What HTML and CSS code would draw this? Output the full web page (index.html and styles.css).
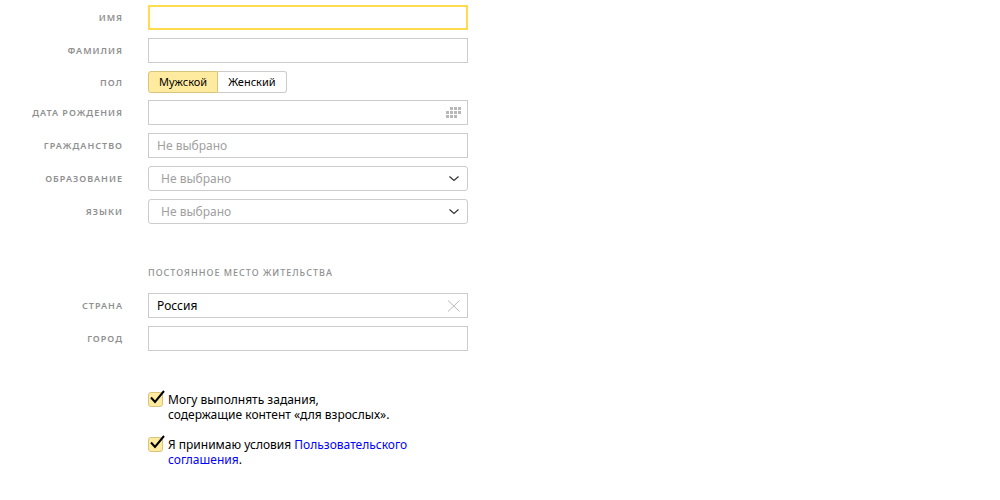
FILE: index.html
```html
<!DOCTYPE html>
<html lang="ru">
<head>
    <meta charset="UTF-8">
    <meta name="viewport" content="width=device-width, initial-scale=1.0">
    <title>Регистрация</title>
    <link rel="stylesheet" href="styles.css">
</head>
<body>
    <form class="form">
        <div class="row">
            <label class="label" for="firstName">Имя</label>
            <div class="field">
                <input class="input active" type="text" id="firstName">
            </div>
        </div>
        <div class="row">
            <label class="label" for="lastName">Фамилия</label>
            <div class="field">
                <input class="input" type="text" id="lastName">
            </div>
        </div>
        <div class="row sexRow" role="radiogroup" aria-labelledby="sexLabel">
            <span class="label" id="sexLabel">Пол</span>
            <div class="switch">
                <label class="option"><input type="radio" name="sex" checked>Мужской</label>
                <label class="option"><input type="radio" name="sex">Женский</label>
            </div>
        </div>
        <div class="row">
            <label class="label" for="birthday">Дата рождения</label>
            <div class="field">
                <input class="input" type="text" id="birthday">
                <button class="iconBtn" type="button" aria-label="Открыть календарь">
                    <svg width="18" height="12" viewBox="0 0 18 12" fill="#b8b8b8">
                        <path d="M5 0h3v3H5zM9 0h3v3H9zM13 0h3v3h-3zM1 4h3v3H1zM5 4h3v3H5zM9 4h3v3H9zM13 4h3v3h-3zM1 8h3v3H1zM5 8h3v3H5zM9 8h3v3H9z"/>
                    </svg>
                </button>
            </div>
        </div>
        <div class="row">
            <label class="label" for="citizenship">Гражданство</label>
            <div class="field">
                <input class="input" type="text" id="citizenship" placeholder="Не выбрано">
            </div>
        </div>
        <div class="row">
            <label class="label" for="education">Образование</label>
            <div class="field">
                <select class="input select" id="education">
                    <option>Не выбрано</option>
                </select>
                <svg class="arrow" width="10" height="6" viewBox="0 0 10 6" fill="none" stroke="#333" stroke-width="1.2">
                    <path d="M.5 .5 5 4.5 9.5 .5"/>
                </svg>
            </div>
        </div>
        <div class="row">
            <label class="label" for="languages">Языки</label>
            <div class="field">
                <select class="input select" id="languages">
                    <option>Не выбрано</option>
                </select>
                <svg class="arrow" width="10" height="6" viewBox="0 0 10 6" fill="none" stroke="#333" stroke-width="1.2">
                    <path d="M.5 .5 5 4.5 9.5 .5"/>
                </svg>
            </div>
        </div>

        <h2 class="heading">Постоянное место жительства</h2>

        <div class="row">
            <label class="label" for="country">Страна</label>
            <div class="field">
                <input class="input" type="text" id="country" value="Россия">
                <button class="iconBtn" type="button" aria-label="Очистить">
                    <svg width="14" height="12" viewBox="0 0 14 12" fill="none" stroke="#b8b8b8">
                        <path d="M1 .5 12.5 11.5M12.5 .5 1 11.5"/>
                    </svg>
                </button>
            </div>
        </div>
        <div class="row">
            <label class="label" for="city">Город</label>
            <div class="field">
                <input class="input" type="text" id="city">
            </div>
        </div>

        <div class="checks">
            <div class="check">
                <span class="box">
                    <input type="checkbox" id="adult" checked>
                    <svg class="tick" width="17" height="17" viewBox="0 0 17 17" fill="none" stroke="#000" stroke-width="2">
                        <path d="M3 8.5 7 13 16 2"/>
                    </svg>
                </span>
                <label for="adult">Могу выполнять задания,<br>содержащие контент «для взрослых».</label>
            </div>
            <div class="check">
                <span class="box">
                    <input type="checkbox" id="terms" checked>
                    <svg class="tick" width="17" height="17" viewBox="0 0 17 17" fill="none" stroke="#000" stroke-width="2">
                        <path d="M3 8.5 7 13 16 2"/>
                    </svg>
                </span>
                <label for="terms">Я принимаю условия <a href="#">Пользовательского<br>соглашения</a>.</label>
            </div>
        </div>
    </form>
</body>
</html>
```
FILE: styles.css
```css
body {
    font-family: "Noto Sans", sans-serif;
    font-size: 12px;
    line-height: 15px;
    color: #000;
    background-color: #fff;
    margin: 0;
}

.form {
    padding-top: 5px;
}

.row {
    display: grid;
    grid-template-columns: 123px minmax(0, 320px);
    column-gap: 25px;
    align-items: center;
    margin-bottom: 8px;
}

.sexRow {
    margin-bottom: 7px;
}

.label,
.heading {
    font-size: 9px;
    font-weight: 600;
    letter-spacing: 1px;
    text-transform: uppercase;
    color: #909090;
}

.label {
    text-align: right;
}

.heading {
    font-weight: 500;
    margin: 41px 0 13px 148px;
}

.field {
    position: relative;
}

.input {
    display: block;
    box-sizing: border-box;
    width: 100%;
    height: 25px;
    padding: 0 28px 0 8px;
    border: 1px solid #ccc;
    border-radius: 0;
    background-color: #fff;
    font: inherit;
    color: #000;
    outline: none;
}

.input::placeholder {
    color: #a0a0a0;
    opacity: 1;
}

/* Yellow frame of the current field */
.active,
.input:focus {
    border: 2px solid #ffdb4d;
}

.select {
    appearance: none;
    padding-left: 12px;
    border-radius: 3px;
    color: #a0a0a0;
}

.arrow {
    position: absolute;
    top: 10px;
    right: 9px;
    pointer-events: none;
}

.iconBtn {
    position: absolute;
    top: 0;
    right: 0;
    display: flex;
    align-items: center;
    justify-content: center;
    width: 28px;
    height: 25px;
    padding: 0;
    border: none;
    background: none;
    cursor: pointer;
}

/* Sex switch */
.switch {
    display: flex;
}

.option {
    padding: 3px 10px;
    border: 1px solid #ccc;
    font-size: 11px;
    line-height: 14px;
    cursor: pointer;
}

.option:first-child {
    border-radius: 3px 0 0 3px;
}

.option:last-child {
    border-left: none;
    border-radius: 0 3px 3px 0;
}

.option:has(:checked) {
    background-color: #ffeba0;
    border-color: #d9c47c;
}

.option input {
    position: absolute;
    opacity: 0;
    margin: 0;
}

/* Checkboxes */
.checks {
    display: grid;
    gap: 15px;
    margin: 41px 0 0 148px;
}

.check {
    display: flex;
    gap: 5px;
}

.box {
    position: relative;
    flex: none;
    height: 15px;
}

.box input {
    appearance: none;
    display: block;
    width: 15px;
    height: 15px;
    margin: 0;
    border: 1px solid #d9c47c;
    border-radius: 3px;
    background-color: #ffeba0;
}

.tick {
    position: absolute;
    top: -3px;
    left: 0;
    pointer-events: none;
}

.box input:not(:checked) + .tick {
    display: none;
}

a {
    color: #00f;
    text-decoration: none;
}
```
